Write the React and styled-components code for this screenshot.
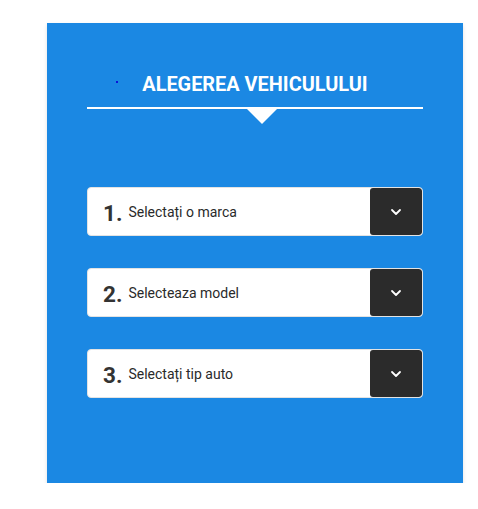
import React from "react";
import styled, { createGlobalStyle } from "styled-components";

const steps = [
  { n: "1.", label: "Selectați o marca" },
  { n: "2.", label: "Selecteaza model" },
  { n: "3.", label: "Selectați tip auto" },
];

const App = () => {
  return (
    <Page>
      <GlobalStyle />
      <Panel>
        <Header>
          <Dot />
          <Title>ALEGEREA VEHICULULUI</Title>
          <Arrow />
        </Header>
        <List>
          {steps.map((s) => (
            <Select key={s.n}>
              <Number>{s.n}</Number>
              <Label>{s.label}</Label>
              <Toggle>
                <svg width="12" height="8" viewBox="0 0 12 8">
                  <path
                    d="M2 2l4 4 4-4"
                    fill="none"
                    stroke="#fff"
                    strokeWidth="1.8"
                    strokeLinecap="round"
                    strokeLinejoin="round"
                  />
                </svg>
              </Toggle>
            </Select>
          ))}
        </List>
      </Panel>
    </Page>
  );
};

export default App;

const GlobalStyle = createGlobalStyle`
  body {
    margin: 0;
    background: #fff;
    font-family: Roboto, "Liberation Sans", sans-serif;
  }
`;

const Page = styled.div`
  padding: 23px 0 0 47px;
`;

const Panel = styled.div`
  width: 416px;
  height: 460px;
  box-sizing: border-box;
  background-color: #1b88e3;
  padding: 0 40px;
  box-shadow: 0 2px 4px rgba(0, 0, 0, 0.12);
`;

const Header = styled.div`
  position: relative;
  height: 86px;
  border-bottom: 2px solid #fff;
  display: flex;
  align-items: flex-end;
  justify-content: center;
  padding-bottom: 10px;
  box-sizing: border-box;
`;

const Dot = styled.span`
  position: absolute;
  left: 29px;
  top: 58px;
  width: 2px;
  height: 2px;
  background: #0a14d8;
`;

const Title = styled.div`
  color: #fff;
  font-weight: 700;
  font-size: 19.9px;
  line-height: 24px;
`;

const Arrow = styled.span`
  position: absolute;
  left: 160px;
  bottom: -17px;
  width: 0;
  height: 0;
  border-left: 15px solid transparent;
  border-right: 15px solid transparent;
  border-top: 15px solid #fff;
`;

const List = styled.div`
  display: flex;
  flex-direction: column;
  gap: 32px;
  padding-top: 78px;
`;

const Select = styled.div`
  height: 49px;
  background: #fff;
  border-radius: 4px;
  display: flex;
  align-items: center;
  padding-left: 15px;
  overflow: hidden;
  border: 1px solid #e3e3e3;
  box-sizing: border-box;
`;

const Number = styled.span`
  font-size: 22.5px;
  font-weight: 700;
  color: #333;
  margin-right: 6px;
  padding-top: 2px;
`;

const Label = styled.span`
  font-size: 14px;
  color: #2a2a2a;
  flex: 1;
  padding-top: 1px;
`;

const Toggle = styled.div`
  width: 52px;
  height: 100%;
  background: #2b2b2b;
  border-radius: 3px;
  display: flex;
  align-items: center;
  justify-content: center;
`;
